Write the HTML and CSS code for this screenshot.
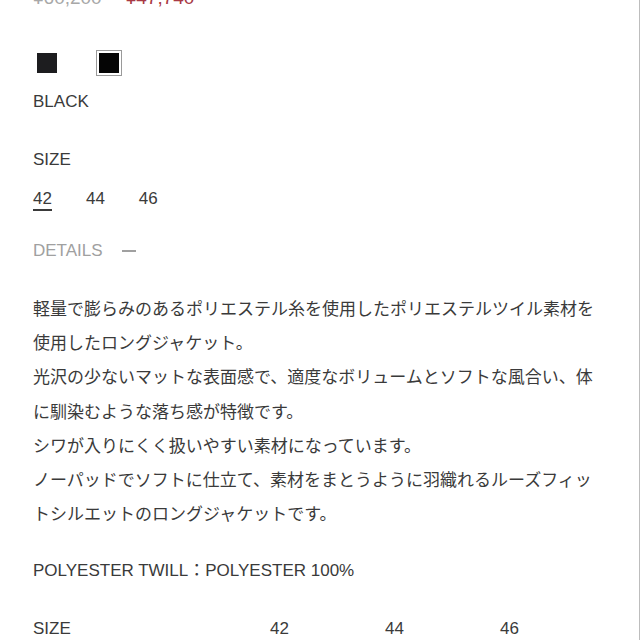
FILE: index.html
```html
<!DOCTYPE html>
<html lang="ja">
<head>
<meta charset="utf-8">
<title>Product detail</title>
<link rel="stylesheet" href="styles.css">
</head>
<body>
<div class="page">
  <div class="price-row">
    <span class="price-old">¥60,200</span>
    <span class="price-sale">¥47,740</span>
  </div>

  <div class="swatches">
    <span class="swatch"><span class="chip chip-a"></span></span>
    <span class="swatch is-selected"><span class="chip chip-b"></span></span>
  </div>
  <div class="color-name">BLACK</div>

  <div class="label">SIZE</div>
  <div class="sizes">
    <span class="size is-active">42</span>
    <span class="size">44</span>
    <span class="size">46</span>
  </div>

  <div class="details-head">
    <span>DETAILS</span>
    <span class="dash"></span>
  </div>

  <p class="desc">軽量で膨らみのあるポリエステル糸を使用したポリエステルツイル素材を使用したロングジャケット。<br>光沢の少ないマットな表面感で、適度なボリュームとソフトな風合い、体に馴染むような落ち感が特徴です。<br>シワが入りにくく扱いやすい素材になっています。<br>ノーパッドでソフトに仕立て、素材をまとうように羽織れるルーズフィットシルエットのロングジャケットです。</p>

  <div class="material">POLYESTER TWILL：POLYESTER 100%</div>

  <div class="size-table">
    <span>SIZE</span>
    <span>42</span>
    <span>44</span>
    <span>46</span>
  </div>
</div>
</body>
</html>
```

FILE: styles.css
```css
html, body {
  margin: 0;
  padding: 0;
  background: #fff;
}

body {
  font-family: "Liberation Sans", "Noto Sans CJK JP", sans-serif;
  font-size: 17px;
  line-height: 20px;
  color: #3a3a3a;
  overflow: hidden;
}

.page {
  box-sizing: border-box;
  width: 640px;
  height: 640px;
  padding: 0 33px;
  border-right: 1px solid #bdbdbd;
  overflow: hidden;
}

.price-row {
  margin-top: -12px;
  display: flex;
  gap: 24px;
  font-size: 19px;
  line-height: 20px;
}

.price-old {
  color: #a8a8a8;
  text-decoration: line-through;
}

.price-sale {
  color: #a83a45;
}

.swatches {
  margin-top: 42px;
  margin-left: 1px;
  display: flex;
  gap: 36px;
}

.swatch {
  box-sizing: border-box;
  width: 26px;
  height: 26px;
  padding: 2px;
  border: 1px solid transparent;
}

.swatch.is-selected {
  border-color: #9a9a9a;
}

.chip {
  display: block;
  width: 20px;
  height: 20px;
}

.chip-a {
  background: #1d1d1f;
}

.chip-b {
  background: #050505;
}

.color-name {
  margin-top: 16px;
}

.label {
  margin-top: 38px;
}

.sizes {
  margin-top: 19px;
  display: flex;
  gap: 34px;
}

.size {
  display: inline-block;
  height: 20px;
  border-bottom: 2px solid transparent;
}

.size.is-active {
  border-bottom-color: #3a3a3a;
}

.details-head {
  margin-top: 30px;
  display: flex;
  align-items: center;
  gap: 19px;
  color: #a0a0a0;
}

.dash {
  display: inline-block;
  width: 14px;
  height: 1.5px;
  background: #a0a0a0;
}

.desc {
  margin: 32px 0 0;
  line-height: 34.2px;
}

.material {
  margin-top: 29px;
}

.size-table {
  margin-top: 38px;
  display: grid;
  grid-template-columns: 237px 115px 115px auto;
}
```
